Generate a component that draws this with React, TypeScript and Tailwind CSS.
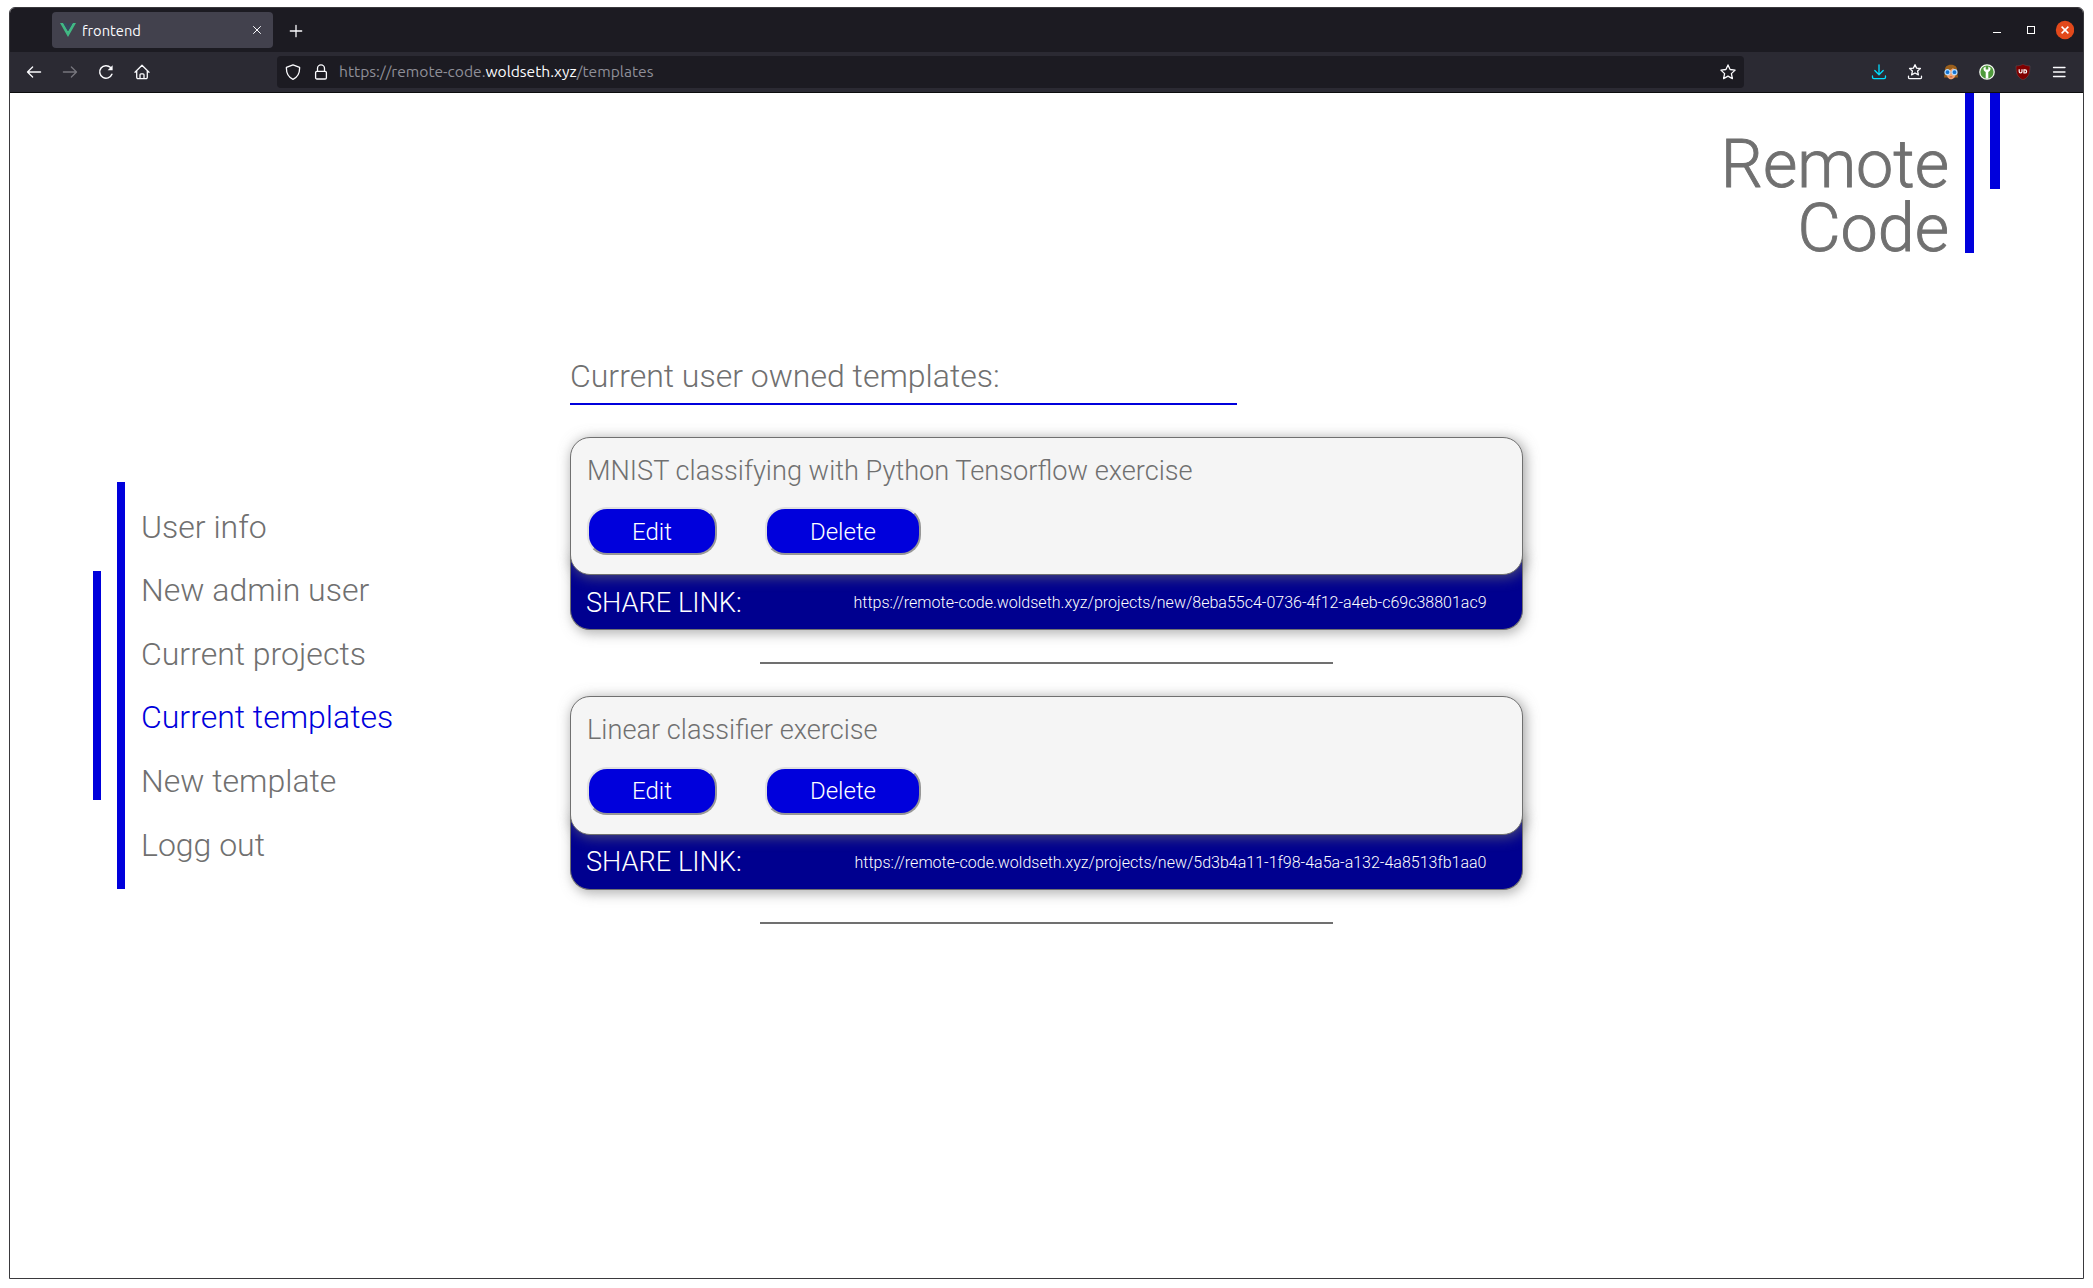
import React from "react";

const NAV = ["User info", "New admin user", "Current projects", "Current templates", "New template", "Logg out"];

const TEMPLATES = [
  {
    title: "MNIST classifying with Python Tensorflow exercise",
    link: "https://remote-code.woldseth.xyz/projects/new/8eba55c4-0736-4f12-a4eb-c69c38801ac9",
  },
  {
    title: "Linear classifier exercise",
    link: "https://remote-code.woldseth.xyz/projects/new/5d3b4a11-1f98-4a5a-a132-4a8513fb1aa0",
  },
];

function Icon({
  children,
  className = "",
  color = "stroke-[#fbfbfe]",
}: {
  children: React.ReactNode;
  className?: string;
  color?: string;
}) {
  return (
    <svg
      viewBox="0 0 16 16"
      className={"h-4 w-4 shrink-0 fill-none " + color + " " + className}
      strokeWidth="1.3"
      strokeLinecap="round"
      strokeLinejoin="round"
    >
      {children}
    </svg>
  );
}

function Slot({ children }: { children: React.ReactNode }) {
  return <div className="flex w-9 shrink-0 items-center justify-center">{children}</div>;
}

function TabStrip() {
  return (
    <div className="flex h-11 items-center bg-[#1c1b22] pl-[42px] pr-[9px]">
      <div className="flex h-9 w-[221px] items-center rounded-[4px] bg-[#42414d] pl-2 pr-2">
        <svg viewBox="0 0 16 14" className="h-[14px] w-4">
          <path d="M0 0h3.2L8 8.3 12.8 0H16L8 13.9z" fill="#41b883" />
          <path d="M3.2 0h2.9L8 3.3 9.9 0h2.9L8 8.3z" fill="#35495e" />
        </svg>
        <span className="ml-[6px] flex-1 pt-[2px] font-[Ubuntu,'Open_Sans',sans-serif] text-[14.67px] leading-[34px] text-[#fbfbfe]">
          frontend
        </span>
        <Icon>
          <path d="M4.5 4.5l7 7M11.5 4.5l-7 7" strokeWidth="1" />
        </Icon>
      </div>
      <Icon className="ml-[14.5px] mt-px">
        <path d="M8 2.3v11.4M2.3 8h11.4" />
      </Icon>
      <div className="flex-1" />
      <svg viewBox="0 0 84 20" className="h-5 w-[84px] fill-none">
        <path d="M3 12.5h8" stroke="#fff" />
        <rect x="37.5" y="6.5" width="7" height="7" stroke="#fff" />
        <circle cx="75" cy="10" r="9.2" fill="#e2491b" />
        <path d="M71.6 6.6l6.8 6.8M78.4 6.6l-6.8 6.8" stroke="#fff" strokeWidth="1.5" />
      </svg>
    </div>
  );
}

function Toolbar() {
  return (
    <div className="flex h-[41px] items-center border-b border-[#0c0c0d] bg-[#2b2a33] pl-[6px]">
      <Slot>
        <Icon>
          <path d="M14.6 8H1.6M6.6 3L1.5 8l5.1 5" />
        </Icon>
      </Slot>
      <Slot>
        <Icon color="stroke-[#77767e]">
          <path d="M1.4 8h13M9.4 3l5.1 5-5.1 5" />
        </Icon>
      </Slot>
      <Slot>
        <Icon>
          <path d="M13.9 10.2a6.3 6.3 0 1 1-1.3-6.6" strokeWidth="1.5" />
          <path d="M14.6 1.2v5h-5z" fill="#fbfbfe" stroke="none" />
        </Icon>
      </Slot>
      <Slot>
        <Icon className="-ml-px">
          <path d="M1 8.2L8 1.2l7 7M2.7 7v6.3a1.3 1.3 0 0 0 1.3 1.3h8a1.3 1.3 0 0 0 1.3-1.3V7" />
          <path d="M6 14.4v-3.6a1 1 0 0 1 1-1h2a1 1 0 0 1 1 1v3.6" />
        </Icon>
      </Slot>
      <div className="ml-[117px] flex h-8 w-[1467px] items-center rounded-[4px] bg-[#1c1b22] pl-2 pr-2">
        <Icon>
          <path d="M8 .8l6.6 2.6c.2 4.8-1.3 9.4-6.6 11.9C2.7 12.8 1.2 8.2 1.4 3.4z" />
        </Icon>
        <Icon className="ml-3">
          <rect x="2.6" y="7.3" width="10.8" height="7.7" rx="1.3" />
          <path d="M4.5 7V4.4a3.5 3.5 0 0 1 7 0V7" />
        </Icon>
        <span className="ml-[10px] flex-1 whitespace-pre pb-px font-[Ubuntu,'Noto_Sans',sans-serif] text-[15.6px] leading-[31px] text-[#8f8f98]">
          https://remote-code.<span className="text-[#fbfbfe]">woldseth.xyz</span>/templates
        </span>
        <Icon>
          <path d="M8 .9l2.1 4.6 5 .6-3.7 3.5 1 5L8 12.1l-4.4 2.5 1-5L.9 6.1l5-.6z" />
        </Icon>
      </div>
      <div className="ml-[117px] flex">
        <Slot>
          <Icon color="stroke-[#00ddff]">
            <path d="M8 .8v9.8M3.8 6.5L8 10.7l4.2-4.2M1.5 12v1.3c0 .8.6 1.4 1.4 1.4h10.2c.8 0 1.4-.6 1.4-1.4V12" />
          </Icon>
        </Slot>
        <Slot>
          <Icon>
            <path d="M8 .7l1.6 3.4 3.8.4-2.8 2.6.8 3.8L8 9l-3.4 1.9.8-3.8-2.8-2.6 3.8-.4zM1.5 12.2v1.2c0 .7.6 1.3 1.3 1.3h10.4c.7 0 1.3-.6 1.3-1.3v-1.2" />
          </Icon>
        </Slot>
        <Slot>
          <svg viewBox="0 0 16 16" className="h-4 w-4">
            <path d="M2 7C1.5 3 4 .8 8 .8s6.5 2.2 6 6.2l1 6.5h-3L8 15l-4-1.5H1z" fill="#9a5f1c" />
            <path d="M3.3 7.5C6 6.5 9 5.5 10 4c1 1.5 2.7 2 2.7 4.5 0 4-2 6.8-4.7 6.8S3.3 12 3.3 7.5z" fill="#f4a573" />
            <circle cx="4.5" cy="8.2" r="2.5" fill="#1473d2" stroke="#b5dcff" strokeWidth="1.2" />
            <circle cx="11.5" cy="8.2" r="2.5" fill="#1473d2" stroke="#b5dcff" strokeWidth="1.2" />
            <path d="M6.6 12.9h2.8" stroke="#b5543a" />
          </svg>
        </Slot>
        <Slot>
          <svg viewBox="0 0 16 16" className="h-4 w-4">
            <circle cx="8" cy="8" r="7.2" fill="#4f9a3c" stroke="#f2f7ef" strokeWidth="1.3" />
            <path d="M6.7 14.5V8C5 7.3 4.4 5.8 4.5 4L6.7 2.4v3h2.6v-3L11.5 4c.1 1.8-.5 3.3-2.2 4v6.5z" fill="#fff" />
          </svg>
        </Slot>
        <Slot>
          <svg viewBox="0 0 16 16" className="h-4 w-4">
            <path d="M8 0c2 1.4 4.2 1.9 7 1.9 0 6.5-.5 11-7 14.1C1.5 12.9 1 8.4 1 1.9 3.8 1.9 6 1.4 8 0z" fill="#800000" stroke="#5d4a50" strokeWidth=".6" />
            <path d="M4.2 5.2v2.4a1.4 1.4 0 0 0 2.8 0V5.2M9 5.8h1a1.6 1.6 0 0 1 0 3.200H9z" fill="none" stroke="#fff" strokeWidth="1.2" />
          </svg>
        </Slot>
        <Slot>
          <Icon>
            <path d="M2.5 3.5h11.5M2.5 8h11.5M2.5 12.5h11.5" />
          </Icon>
        </Slot>
      </div>
    </div>
  );
}

function Header() {
  return (
    <header className="flex h-[160px] items-start justify-end pr-[83px]">
      <h1 className="mr-4 pt-[39px] text-right text-[66.4px] font-light leading-[64px] text-[#707070] [-webkit-text-stroke:0.9px_#707070]">
        Remote
        <br />
        Code
      </h1>
      <div className="h-[160px] w-[9px] bg-[#0000dc]" />
      <div className="ml-4 h-24 w-[10px] bg-[#0000dc]" />
    </header>
  );
}

function SideNav() {
  return (
    <nav className="ml-[83px] mt-[229px] flex h-[407px] items-center gap-4">
      <div className="h-[229px] w-2 bg-[#0000dc]" />
      <div className="h-full w-2 bg-[#0000dc]" />
      <ul className="h-full w-[429px] pt-[13.7px] text-[32px] leading-[63.6px] text-[#707070]">
        {NAV.map((item) => (
          <li key={item} className={item === "Current templates" ? "text-[#0000dc]" : ""}>
            {item}
          </li>
        ))}
      </ul>
    </nav>
  );
}

function PillButton({ label, className }: { label: string; className: string }) {
  return (
    <button
      className={
        "flex h-[48px] items-center justify-center rounded-[20px] border-2 border-b-[#979797] border-l-[#e0e0e0] border-r-[#979797] border-t-[#e0e0e0] bg-[#0000dc] pt-px text-2xl font-light text-white " +
        className
      }
    >
      {label}
    </button>
  );
}

function TemplateCard({ title, link }: { title: string; link: string }) {
  return (
    <>
      <article className="h-[193.3px]">
        <div className="relative z-10 h-[138.3px] rounded-[20px] border border-[#707070] bg-[#f5f5f5] pl-4 pt-[17px] shadow-[2px_2px_14px_rgba(112,112,112,0.7)]">
          <h3 className="text-[27.2px] leading-8 text-[#707070]">{title}</h3>
          <div className="mt-[20.3px] flex">
            <PillButton label="Edit" className="w-[130px]" />
            <PillButton label="Delete" className="ml-12 w-[156px]" />
          </div>
        </div>
        <div className="-mt-6 flex h-[79px] items-center justify-between rounded-b-[20px] border border-t-0 border-[#707070] bg-[#00008f] pl-[15px] pr-[35.5px] pt-[26px] text-white shadow-[2px_4px_12px_rgba(112,112,112,0.5)]">
          <span className="pt-[0.6px] text-[27.2px]">SHARE LINK:</span>
          <span className="text-base">{link}</span>
        </div>
      </article>
      <div className="mx-auto mb-8 mt-8 h-[2px] w-[573px] bg-[#707070]" />
    </>
  );
}

export default function App() {
  return (
    <div className="h-[1288px] w-[2093px] bg-white pl-[9px] pt-[7px]">
      <div className="h-[1272px] w-[2075px] overflow-hidden rounded-t-[6px] border border-[#3a393d] bg-white">
        <TabStrip />
        <Toolbar />
        <div className="font-[Roboto,sans-serif] font-light">
          <Header />
          <div className="flex items-start">
            <SideNav />
            <main className="mt-[104px] w-[953px]">
              <h2 className="h-12 w-[667px] border-b-2 border-[#0000dc] text-[32px] leading-[38px] text-[#707070]">
                Current user owned templates:
              </h2>
              <div className="h-8" />
              {TEMPLATES.map((t) => (
                <TemplateCard key={t.link} {...t} />
              ))}
            </main>
          </div>
        </div>
      </div>
    </div>
  );
}
